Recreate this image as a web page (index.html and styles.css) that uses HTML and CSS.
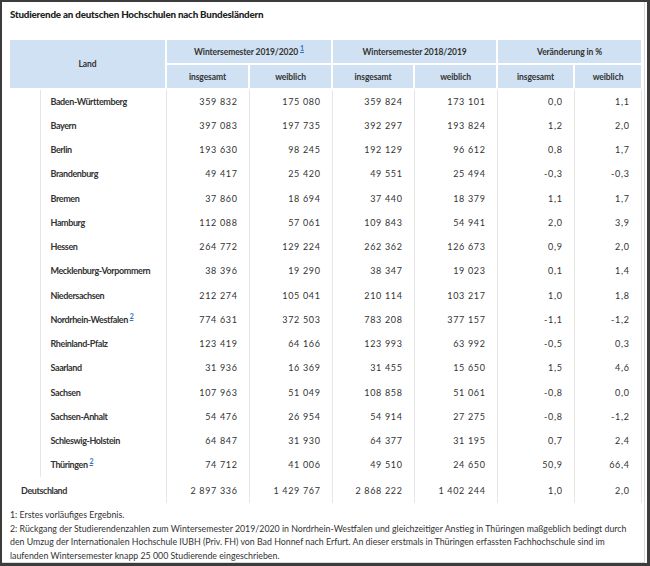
FILE: index.html
```html
<!DOCTYPE html>
<html lang="de">
<head>
<meta charset="utf-8">
<link rel="stylesheet" href="styles.css">
</head>
<body>
<div class="frame">
  <div class="panel">
    <h1 class="title">Studierende an deutschen Hochschulen nach Bundesländern</h1>
    <table class="data">
      <colgroup>
        <col class="c-sp"><col class="c-name">
        <col class="c-n"><col class="c-n"><col class="c-n2"><col class="c-n">
        <col class="c-p1"><col class="c-p2">
      </colgroup>
      <thead>
        <tr class="h1">
          <th colspan="2" rowspan="2">Land</th>
          <th colspan="2">Wintersemester 2019/2020 <sup class="fn">1</sup></th>
          <th colspan="2">Wintersemester 2018/2019</th>
          <th colspan="2">Veränderung in %</th>
        </tr>
        <tr class="h2">
          <th>insgesamt</th><th>weiblich</th>
          <th>insgesamt</th><th>weiblich</th>
          <th>insgesamt</th><th>weiblich</th>
        </tr>
      </thead>
      <tbody>
        <tr><td class="sp"></td><th class="name">Baden-Württemberg</th><td>359 832</td><td>175 080</td><td>359 824</td><td>173 101</td><td>0,0</td><td>1,1</td></tr>
        <tr><td class="sp"></td><th class="name">Bayern</th><td>397 083</td><td>197 735</td><td>392 297</td><td>193 824</td><td>1,2</td><td>2,0</td></tr>
        <tr><td class="sp"></td><th class="name">Berlin</th><td>193 630</td><td>98 245</td><td>192 129</td><td>96 612</td><td>0,8</td><td>1,7</td></tr>
        <tr><td class="sp"></td><th class="name">Brandenburg</th><td>49 417</td><td>25 420</td><td>49 551</td><td>25 494</td><td>-0,3</td><td>-0,3</td></tr>
        <tr><td class="sp"></td><th class="name">Bremen</th><td>37 860</td><td>18 694</td><td>37 440</td><td>18 379</td><td>1,1</td><td>1,7</td></tr>
        <tr><td class="sp"></td><th class="name">Hamburg</th><td>112 088</td><td>57 061</td><td>109 843</td><td>54 941</td><td>2,0</td><td>3,9</td></tr>
        <tr><td class="sp"></td><th class="name">Hessen</th><td>264 772</td><td>129 224</td><td>262 362</td><td>126 673</td><td>0,9</td><td>2,0</td></tr>
        <tr><td class="sp"></td><th class="name">Mecklenburg-Vorpommern</th><td>38 396</td><td>19 290</td><td>38 347</td><td>19 023</td><td>0,1</td><td>1,4</td></tr>
        <tr><td class="sp"></td><th class="name">Niedersachsen</th><td>212 274</td><td>105 041</td><td>210 114</td><td>103 217</td><td>1,0</td><td>1,8</td></tr>
        <tr><td class="sp"></td><th class="name">Nordrhein-Westfalen <sup class="fn">2</sup></th><td>774 631</td><td>372 503</td><td>783 208</td><td>377 157</td><td>-1,1</td><td>-1,2</td></tr>
        <tr><td class="sp"></td><th class="name">Rheinland-Pfalz</th><td>123 419</td><td>64 166</td><td>123 993</td><td>63 992</td><td>-0,5</td><td>0,3</td></tr>
        <tr><td class="sp"></td><th class="name">Saarland</th><td>31 936</td><td>16 369</td><td>31 455</td><td>15 650</td><td>1,5</td><td>4,6</td></tr>
        <tr><td class="sp"></td><th class="name">Sachsen</th><td>107 963</td><td>51 049</td><td>108 858</td><td>51 061</td><td>-0,8</td><td>0,0</td></tr>
        <tr><td class="sp"></td><th class="name">Sachsen-Anhalt</th><td>54 476</td><td>26 954</td><td>54 914</td><td>27 275</td><td>-0,8</td><td>-1,2</td></tr>
        <tr><td class="sp"></td><th class="name">Schleswig-Holstein</th><td>64 847</td><td>31 930</td><td>64 377</td><td>31 195</td><td>0,7</td><td>2,4</td></tr>
        <tr><td class="sp"></td><th class="name">Thüringen <sup class="fn">2</sup></th><td>74 712</td><td>41 006</td><td>49 510</td><td>24 650</td><td>50,9</td><td>66,4</td></tr>
        <tr class="total"><th colspan="2" class="name">Deutschland</th><td>2 897 336</td><td>1 429 767</td><td>2 868 222</td><td>1 402 244</td><td>1,0</td><td>2,0</td></tr>
      </tbody>
    </table>
    <div class="notes">
      <p>1: Erstes vorläufiges Ergebnis.</p>
      <p>2: Rückgang der Studierendenzahlen zum Wintersemester 2019/2020 in Nordrhein-Westfalen und gleichzeitiger Anstieg in Thüringen maßgeblich bedingt durch den Umzug der Internationalen Hochschule IUBH (Priv. FH) von Bad Honnef nach Erfurt. An dieser erstmals in Thüringen erfassten Fachhochschule sind im laufenden Wintersemester knapp 25 000 Studierende eingeschrieben.</p>
    </div>
  </div>
</div>
</body>
</html>
```

FILE: styles.css
```css
* { box-sizing: border-box; }
html, body { margin: 0; padding: 0; background: #fff; }
body {
  font-family: Lato, "Noto Sans", sans-serif;
  color: #333;
}
.frame {
  width: 650px;
  height: 566px;
  border: 2px solid #3c3c3c;
  border-right-width: 3px;
  border-bottom-width: 3px;
  background: #fff;
  overflow: hidden;
}
.panel {
  height: 100%;
  padding: 0 0 0 8px;
  border-right: 1px solid #d9d9d9;
  border-bottom: 1px solid #d9d9d9;
  margin-right: 2px;
  margin-bottom: 2px;
}
.title {
  margin: 0;
  padding-top: 6px;
  height: 38px;
  font-size: 9.8px;
  font-weight: 900;
  color: #222;
  letter-spacing: -0.2px;
}
.data {
  border-collapse: collapse;
  table-layout: fixed;
  width: 631px;
  font-size: 9px;
}
.c-sp { width: 30px; }
.c-name { width: 126px; }
.c-n { width: 83px; }
.c-n2 { width: 82px; }
.c-p1 { width: 77px; }
.c-p2 { width: 67px; }
thead th {
  background: #cfe1f2;
  font-weight: 700;
  font-size: 8.5px;
  color: #333;
  text-align: center;
  border-left: 2px solid #fff;
  border-bottom: 2px solid #fff;
  padding: 0;
  letter-spacing: -0.1px;
}
thead tr th:first-child { border-left: 0; }
thead .h2 th:first-child { border-left: 2px solid #fff; }
.h1 th { height: 24px; }
.h2 th { height: 25px; }
.h1 th:first-child { height: 49px; }
.fn {
  color: #2f73c4;
  font-size: 7px;
  vertical-align: 4px;
  line-height: 0;
  text-decoration: underline;
}
tbody td, tbody th {
  height: 24.25px;
  padding: 0 11px 0 0;
  text-align: right;
  border-left: 1px solid #e6e6e6;
  white-space: nowrap;
  letter-spacing: 0.65px;
}
tbody td:last-child { border-right: 1px solid #e6e6e6; }
tbody .sp { padding: 0; border-left: 0; }
tbody th.name {
  text-align: left;
  font-weight: 700;
  padding-left: 10px;
  letter-spacing: -0.4px;
}
tbody tr.total th.name { padding-left: 11px; border-left: 0; }
tbody tr.total td, tbody tr.total th { height: 26px; }
.notes {
  margin-top: 5px;
  font-size: 8.8px;
  line-height: 13.6px;
  letter-spacing: 0;
  width: 625px;
}
.notes p { margin: 0; }
```
